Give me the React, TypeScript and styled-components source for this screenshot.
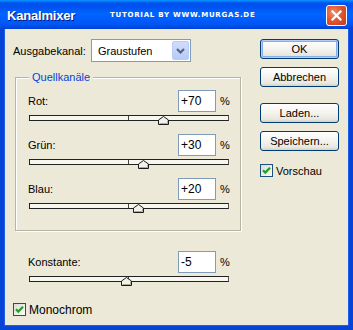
import styled, { createGlobalStyle } from "styled-components";

const GlobalStyle = createGlobalStyle`
    html, body {
        margin: 0;
        padding: 0;
        background: #ece9d8;
    }
    * {
        box-sizing: border-box;
    }
`;

interface Channel {
    id: number;
    label: string;
    value: number;
}

const channels: Channel[] = [
    { id: 1, label: "Rot:", value: 70 },
    { id: 2, label: "Grün:", value: 30 },
    { id: 3, label: "Blau:", value: 20 },
];

const buttons = [
    { id: 1, label: "OK", isDefault: true, gap: 0 },
    { id: 2, label: "Abbrechen", isDefault: false, gap: 8 },
    { id: 3, label: "Laden...", isDefault: false, gap: 16 },
    { id: 4, label: "Speichern...", isDefault: false, gap: 8 },
];

function Slider({ value }: { value: number }) {
    // Bereich -200 .. +200
    const pos = ((value + 200) / 400) * 100;
    return (
        <Track>
            <CenterTick />
            <Thumb style={{ left: `${pos}%` }}>
                <svg width="11" height="9" viewBox="0 0 11 9">
                    <path d="M0.5 8.5 V4 L5.5 0.5 L10.5 4 V8.5 Z" fill="#f3f2ea" stroke="#1a1a1a" />
                    <path d="M9.5 4.5 V7.5 H1.5" fill="none" stroke="#aba897" />
                </svg>
            </Thumb>
        </Track>
    );
}

function ValueBlock({ label, value, sign = true }: { label: string; value: number; sign?: boolean }) {
    const text = sign && value > 0 ? `+${value}` : `${value}`;
    return (
        <Block>
            <ValueRow>
                <span>{label}</span>
                <InputWrap>
                    <NumberBox>{text}</NumberBox>
                    <Percent>%</Percent>
                </InputWrap>
            </ValueRow>
            <Slider value={value} />
        </Block>
    );
}

function CheckBox({ label, big }: { label: string; big?: boolean }) {
    return (
        <CheckRow big={big}>
            <Box>
                <svg width="9" height="9" viewBox="0 0 9 9">
                    <path d="M1 4.2 L3.3 6.6 L8 1.8" fill="none" stroke="#21a121" strokeWidth="2.2" />
                </svg>
            </Box>
            <span>{label}</span>
        </CheckRow>
    );
}

export default function App() {
    return (
        <>
            <GlobalStyle />
            <Window>
                <TitleBar>
                    <Title>Kanalmixer</Title>
                    <Tutorial>TUTORIAL BY WWW.MURGAS.DE</Tutorial>
                    <CloseButton>
                        <svg width="11" height="11" viewBox="0 0 11 11">
                            <path d="M1.5 1.5 L9.5 9.5 M9.5 1.5 L1.5 9.5" stroke="#fff" strokeWidth="2.2" strokeLinecap="square" />
                        </svg>
                    </CloseButton>
                </TitleBar>
                <Body>
                    <LeftPane>
                        <OutputRow>
                            <OutputLabel>Ausgabekanal:</OutputLabel>
                            <Select>
                                <span>Graustufen</span>
                                <DropButton>
                                    <svg width="9" height="6" viewBox="0 0 9 6">
                                        <path d="M1 1 L4.5 4.5 L8 1" fill="none" stroke="#4d6185" strokeWidth="2" />
                                    </svg>
                                </DropButton>
                            </Select>
                        </OutputRow>
                        <GroupBox>
                            <Legend>Quellkanäle</Legend>
                            {channels.map((c) => (
                                <ValueBlock key={c.id} label={c.label} value={c.value} />
                            ))}
                        </GroupBox>
                        <ConstantBlock>
                            <ValueBlock label="Konstante:" value={-5} sign={false} />
                        </ConstantBlock>
                        <MonoRow>
                            <CheckBox label="Monochrom" big />
                        </MonoRow>
                    </LeftPane>
                    <RightPane>
                        {buttons.map((b) => (
                            <Button key={b.id} isDefault={b.isDefault} gap={b.gap}>
                                {b.label}
                            </Button>
                        ))}
                        <PreviewRow>
                            <CheckBox label="Vorschau" />
                        </PreviewRow>
                    </RightPane>
                </Body>
            </Window>
        </>
    );
}

const Window = styled.div`
    width: 353px;
    height: 330px;
    display: flex;
    flex-direction: column;
    font-family: "Liberation Sans", Arial, sans-serif;
    font-size: 11px;
    color: #000;
`;

const TitleBar = styled.div`
    height: 29px;
    display: flex;
    align-items: center;
    padding: 1px 6px 0 7px;
    background: linear-gradient(
        to bottom,
        #0997ff 0px,
        #0053ee 3px,
        #0050ee 6px,
        #0066ff 14px,
        #005bff 20px,
        #0055ef 25px,
        #0040d5 29px
    );
`;

const Title = styled.span`
    width: 103px;
    font-size: 13px;
    font-weight: bold;
    color: #fff;
    letter-spacing: -0.2px;
    text-shadow: 1px 1px 0 #0a1883;
`;

const Tutorial = styled.span`
    font-family: "DejaVu Sans", sans-serif;
    font-size: 7px;
    font-weight: bold;
    letter-spacing: 0.75px;
    color: #fff;
`;

const CloseButton = styled.div`
    margin-left: auto;
    width: 21px;
    height: 21px;
    border: 1px solid #fff;
    border-radius: 3px;
    display: flex;
    align-items: center;
    justify-content: center;
    background: radial-gradient(circle at 35% 35%, #f09070 0%, #e2582f 45%, #c4381a 100%);
`;

const Body = styled.div`
    flex: 1;
    display: flex;
    background: #ece9d8;
    border: 4px solid #0843d8;
    border-top: none;
    box-shadow: inset 1px 0 0 #1d5ee8, inset -1px 0 0 #1d5ee8, inset 0 -1px 0 #1d5ee8;
    padding: 10px 0 0 9px;
`;

const LeftPane = styled.div`
    width: 227px;
    display: flex;
    flex-direction: column;
`;

const OutputRow = styled.div`
    display: flex;
    align-items: center;
    height: 23px;
`;

const OutputLabel = styled.span`
    width: 78px;
`;

const Select = styled.div`
    width: 100px;
    height: 23px;
    border: 1px solid #7f9db9;
    background: #fff;
    display: flex;
    align-items: center;
    justify-content: space-between;
    padding: 1px 1px 1px 6px;
`;

const DropButton = styled.div`
    width: 17px;
    height: 19px;
    border: 1px solid #b9cdf7;
    border-radius: 2px;
    background: linear-gradient(to bottom, #d0dcfb, #b6cbf7);
    display: flex;
    align-items: center;
    justify-content: center;
`;

const GroupBox = styled.div`
    position: relative;
    margin: 15px 0 0 2px;
    width: 226px;
    border: 1px solid #b5b4a6;
    box-shadow: inset 1px 1px 0 #fff, 1px 1px 0 #fff;
    padding: 12px 11px 21px 12px;
    display: flex;
    flex-direction: column;
    gap: 13px;
`;

const Legend = styled.span`
    position: absolute;
    top: -7px;
    left: 13px;
    padding: 0 3px;
    background: #ece9d8;
    color: #0046d5;
`;

const Block = styled.div`
    display: flex;
    flex-direction: column;
    width: 201px;
`;

const ValueRow = styled.div`
    display: flex;
    align-items: center;
    justify-content: space-between;
    height: 22px;
`;

const InputWrap = styled.div`
    display: flex;
    align-items: center;
`;

const NumberBox = styled.div`
    width: 38px;
    height: 22px;
    border: 1px solid #7f9db9;
    background: #fff;
    font-size: 12px;
    line-height: 20px;
    padding-left: 2px;
    margin-right: 4px;
`;

const Percent = styled.span`
    width: 9px;
`;

const Track = styled.div`
    position: relative;
    margin: 3px 0 0 1px;
    width: 200px;
    height: 6px;
    border: 1px solid #222;
    border-right-color: #555;
    background: #f7f6ef;
`;

const CenterTick = styled.div`
    position: absolute;
    left: 98px;
    top: 0;
    width: 1px;
    height: 4px;
    background: #444;
`;

const Thumb = styled.div`
    position: absolute;
    top: 0;
    width: 11px;
    height: 9px;
    margin-left: -6px;
    display: flex;
`;

const ConstantBlock = styled.div`
    margin: 20px 0 0 15px;
`;

const MonoRow = styled.div`
    margin-top: 21px;
`;

const CheckRow = styled.div<{ big?: boolean }>`
    display: flex;
    align-items: center;
    gap: 3px;
    font-size: ${({ big }) => (big ? "12px" : "11px")};
    height: 13px;
`;

const Box = styled.div`
    width: 13px;
    height: 13px;
    border: 1px solid #1c5180;
    background: linear-gradient(135deg, #dcdcd7, #fbfbf9);
    display: flex;
    align-items: center;
    justify-content: center;
`;

const RightPane = styled.div`
    margin-left: 20px;
    width: 79px;
    display: flex;
    flex-direction: column;
`;

const Button = styled.div<{ isDefault: boolean; gap: number }>`
    margin-top: ${({ gap }) => gap}px;
    height: 20px;
    border: 1px solid #003c74;
    border-radius: 3px;
    display: flex;
    align-items: center;
    justify-content: center;
    background: linear-gradient(to bottom, #ffffff 0%, #f4f3ee 50%, #e9e7dd 85%, #d6d0c5 100%);
    box-shadow: ${({ isDefault }) =>
        isDefault ? "inset 0 0 0 1px #b4ccf8, inset 0 0 0 2px #89ade4" : "none"};
`;

const PreviewRow = styled.div`
    margin-top: 13px;
`;
